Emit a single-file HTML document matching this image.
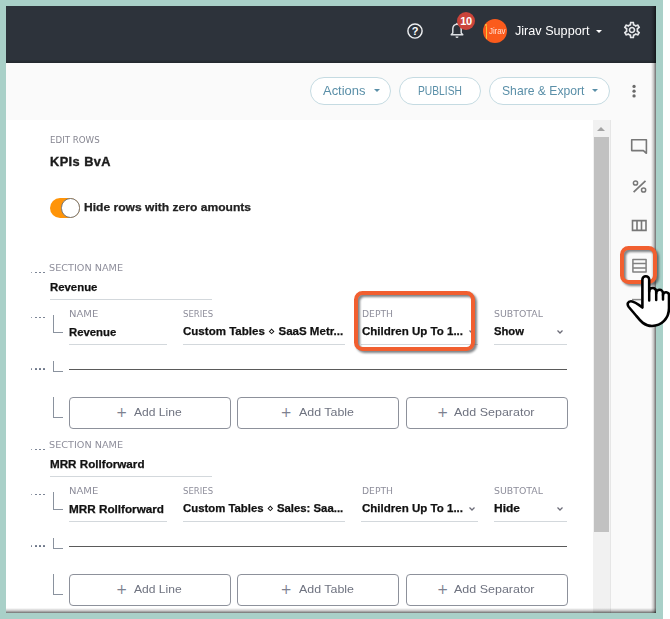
<!DOCTYPE html>
<html lang="en">
<head>
<meta charset="utf-8">
<title>Edit Rows - KPIs BvA</title>
<style>
html,body{margin:0;padding:0;}
body{width:670px;height:619px;background:#fff;position:relative;overflow:hidden;font-family:"Liberation Sans","DejaVu Sans",sans-serif;}
.frame{position:absolute;left:0;top:0;width:663px;height:619px;background:#a9d0c8;}
.app{position:absolute;left:6px;top:6px;width:650.3px;height:606.5px;background:#fafafa;overflow:hidden;}
.app *{box-sizing:border-box;}
.abs{position:absolute;white-space:nowrap;}
.hdr{position:absolute;left:0;top:0;width:651px;height:56.5px;background:linear-gradient(to bottom,#2d333b 0,#2d333b 53.5px,#23282e 56.5px);}
.panel{position:absolute;left:0;top:113.5px;width:587px;height:500px;background:#fff;}
.sbar{position:absolute;left:587px;top:113.5px;width:18px;height:500px;background:#f1f1f1;border-right:1px solid #e6e6e6;}
.thumb{position:absolute;left:588px;top:131px;width:15px;height:394.5px;background:#c1c1c1;}
.pill{position:absolute;top:70.8px;height:28.7px;border:1px solid #c5dbe2;border-radius:14.5px;background:#fff;}
.ul{position:absolute;height:1px;background:#d3d8dc;}
.dots{position:absolute;width:15px;height:2px;}
.dots i{position:absolute;top:0;width:1.5px;height:1.5px;background:#626c80;border-radius:.4px;}
.brk{position:absolute;border-left:1px solid #8a929e;border-bottom:1px solid #8a929e;width:10px;}
.btn{position:absolute;height:32px;width:162px;border:1px solid #8d919b;border-radius:4px;background:#fff;}
.sep{position:absolute;height:1px;background:#5a5a5a;}
.hl{position:absolute;box-sizing:border-box;border:4.3px solid #f15f30;border-radius:8.5px;filter:drop-shadow(2.2px 2.4px 1.3px rgba(40,45,50,.6));}
.b{-webkit-text-stroke:.25px currentColor;}
.djr{font-family:"DejaVu Sans",sans-serif;}
.t{position:absolute;white-space:nowrap;transform-origin:0 50%;display:block;}
.tog{position:absolute;left:43.7px;top:192.2px;width:30.7px;height:19.7px;border-radius:10px;background:#ff9408;}
.knob{position:absolute;right:0;top:0;width:19.7px;height:19.7px;border-radius:10px;background:#fff;border:1px solid #777;}
</style>
</head>
<body>
<div class="frame"></div>
<div class="app">
  <!-- top dark header -->
  <div class="hdr">
    <!-- help icon -->
    <svg class="abs" style="left:400px;top:16px" width="18" height="18" viewBox="0 0 18 18"><circle cx="9" cy="9" r="7.1" fill="none" stroke="#eceef0" stroke-width="1.45"/><text x="9" y="13" text-anchor="middle" font-family="Liberation Sans, sans-serif" font-size="11" font-weight="bold" fill="#fff">?</text></svg>
    <!-- bell -->
    <svg class="abs" style="left:442.8px;top:15.8px" width="16" height="18" viewBox="0 0 16 18"><path d="M8 2.2c-2.6 0-4.2 2-4.2 4.6v4.2l-1.6 1.7h11.6l-1.6-1.7V6.800c0-2.600-1.600-4.600-4.200-4.600z" fill="none" stroke="#dfe2e5" stroke-width="1.45" stroke-linejoin="round"/><path d="M6.500 14.500a1.500 1.500 0 0 0 3 0z" fill="#dfe2e5"/><rect x="7.200" y="0.800" width="1.600" height="2" rx=".8" fill="#dfe2e5"/></svg>
    <div class="abs" style="left:451px;top:5.500px;width:18px;height:18px;border-radius:9px;background:#cb443b;color:#fff;font-size:11px;font-weight:bold;line-height:18px;text-align:center;letter-spacing:-.3px">10</div>
    <!-- avatar -->
    <div class="abs" style="left:477px;top:13px;width:24px;height:24px;border-radius:12px;background:#fb5b1c;color:#ffdccf;font-size:9.5px;line-height:24px;letter-spacing:-.1px"><span style="position:absolute;left:2.8px;top:6.6px;width:1.2px;height:13px;background:#f9c33a;border-radius:1px"></span><span style="position:absolute;left:2.300px;top:5px;width:2.2px;height:2.2px;background:#f9c33a;border-radius:2px"></span><span style="position:absolute;left:5.8px;top:0;transform:scaleX(.84);transform-origin:0 50%">Jirav</span></div>
    <div class="abs" style="left:590px;top:24px;width:0;height:0;border-left:3.500px solid transparent;border-right:3.500px solid transparent;border-top:3.500px solid #fff"></div>
    <!-- gear -->
    <svg class="abs" style="left:616.4px;top:14px" width="20" height="20" viewBox="0 0 24 24"><path fill="#e6e8ea" d="M19.430 12.980c.040-.320.070-.640.070-.980s-.030-.660-.070-.980l2.110-1.650c.190-.150.240-.420.120-.640l-2-3.460c-.090-.160-.260-.250-.440-.250-.060 0-.120.010-.170.030l-2.490 1c-.520-.400-1.080-.730-1.690-.980l-.380-2.650C14.460 2.180 14.250 2 14 2h-4c-.250 0-.460.180-.490.420l-.380 2.650c-.610.250-1.170.590-1.690.980l-2.490-1c-.060-.020-.120-.030-.180-.030-.170 0-.340.090-.430.250l-2 3.460c-.130.220-.070.490.120.640l2.110 1.650c-.040.320-.070.650-.070.980s.030.660.070.980l-2.110 1.650c-.190.150-.240.420-.120.640l2 3.460c.090.160.260.250.440.250.060 0 .120-.10.170-.030l2.490-1c.520.400 1.080.730 1.690.980l.380 2.650c.030.240.240.420.490.420h4c.250 0 .460-.180.490-.420l.380-2.650c.610-.250 1.170-.590 1.690-.980l2.490 1c.060.020.120.030.180.030.170 0 .340-.090.430-.250l2-3.460c.120-.220.070-.490-.120-.640l-2.110-1.650zm-1.980-1.710c.040.310.050.520.050.730 0 .210-.020.430-.050.730l-.140 1.130.890.700 1.080.840-.700 1.210-1.270-.510-1.040-.420-.900.680c-.430.320-.840.560-1.250.730l-1.060.430-.160 1.130-.200 1.350h-1.400l-.190-1.350-.160-1.130-1.060-.430c-.430-.180-.830-.410-1.230-.710l-.910-.700-1.060.430-1.270.510-.700-1.210 1.080-.840.890-.700-.140-1.130c-.030-.310-.050-.540-.050-.740s.020-.430.050-.730l.140-1.130-.890-.700-1.080-.840.700-1.210 1.270.510 1.040.420.900-.680c.430-.320.840-.560 1.250-.730l1.060-.430.160-1.130.200-1.350h1.390l.190 1.350.160 1.130 1.060.430c.430.180.830.410 1.230.710l.910.700 1.060-.430 1.270-.510.700 1.210-1.070.850-.890.700.140 1.130zM12 8c-2.210 0-4 1.790-4 4s1.790 4 4 4 4-1.790 4-4-1.790-4-4-4zm0 6c-1.100 0-2-.900-2-2s.900-2 2-2 2 .900 2 2-.900 2-2 2z"/></svg>
  </div>
  <span class="t" id="t_user" style="left:509.20px;top:15.60px;font-size:13px;line-height:18px;color:#fff;transform:scaleX(0.9714);">Jirav Support</span>
  <div class="pill" style="left:303.5px;width:81.1px"></div>
  <span class="t" id="p_act" style="left:317.40px;top:76.10px;font-size:13px;line-height:18px;color:#5a8fa8;transform:scaleX(0.9967);">Actions</span>
  <div class="abs" style="left:367.6px;top:82.7px;width:0;height:0;border-left:3.2px solid transparent;border-right:3.2px solid transparent;border-top:3.2px solid #5a8fa8"></div>
  <div class="pill" style="left:392.6px;width:82px"></div>
  <span class="t" id="p_pub" style="left:411.90px;top:76.80px;font-size:12px;line-height:16px;color:#5a8fa8;transform:scaleX(0.8548);">PUBLISH</span>
  <div class="pill" style="left:483px;width:120.8px"></div>
  <span class="t" id="p_shr" style="left:496.30px;top:76.10px;font-size:13px;line-height:18px;color:#5a8fa8;transform:scaleX(0.9358);">Share &amp; Export</span>
  <div class="abs" style="left:586.3px;top:82.7px;width:0;height:0;border-left:3.2px solid transparent;border-right:3.2px solid transparent;border-top:3.2px solid #5a8fa8"></div>
  <svg class="abs" style="left:620px;top:74px" width="16" height="24" viewBox="626 80 16 24"><circle cx="634.05" cy="86.4" r="1.65" fill="#6a6a6a"/><circle cx="634.05" cy="91.15" r="1.65" fill="#6a6a6a"/><circle cx="634.05" cy="95.9" r="1.65" fill="#6a6a6a"/></svg>
  <div class="panel"></div><div class="sbar"></div><div class="thumb"></div>
  <div class="abs" style="left:591.2px;top:120.7px;width:0;height:0;border-left:4px solid transparent;border-right:4px solid transparent;border-bottom:4px solid #a3a3a3"></div>
  <span class="t djr" id="h_edit" style="left:44.10px;top:127.00px;font-size:9.5px;line-height:13px;color:#868691;transform:scaleX(0.9127);">EDIT ROWS</span>
  <span class="t b" id="h_title" style="left:44.10px;top:147.50px;font-size:12px;line-height:16px;color:#1c1c1c;font-weight:bold;transform:scaleX(1.0661);letter-spacing:.4px;-webkit-text-stroke:.35px #1c1c1c;">KPIs BvA</span>
  <div class="tog"><div class="knob"></div></div>
  <span class="t b" id="h_hide" style="left:78.40px;top:192.80px;font-size:11.4px;line-height:16px;color:#222;font-weight:bold;transform:scaleX(1.0597);">Hide rows with zero amounts</span>
  <div class="dots" style="left:24.55px;top:265.65px"><i style="left:0px"></i><i style="left:4.8px"></i><i style="left:8.6px"></i><i style="left:12.5px"></i></div>
    <span class="t djr" id="s1_l0" style="left:43.40px;top:254.60px;font-size:9.5px;line-height:13px;color:#8e8e9b;transform:scaleX(1.0181);">SECTION NAME</span>
    <span class="t b" id="s1_v0" style="left:44.00px;top:272.50px;font-size:11.5px;line-height:16px;color:#111;font-weight:bold;transform:scaleX(0.9888);">Revenue</span>
    <div class="ul" style="left:44px;top:293px;width:161.5px"></div>
    <div class="dots" style="left:24.55px;top:310.75px"><i style="left:0px"></i><i style="left:4.8px"></i><i style="left:8.6px"></i><i style="left:12.5px"></i></div>
    <div class="brk" style="left:47px;top:309px;height:18px;width:10px"></div>
    <span class="t djr" id="s1_l1" style="left:63.20px;top:300.70px;font-size:9.5px;line-height:13px;color:#8e8e9b;transform:scaleX(1.0535);">NAME</span>
    <span class="t b" id="s1_v1" style="left:63.20px;top:317.50px;font-size:11.5px;line-height:16px;color:#111;font-weight:bold;transform:scaleX(0.9846);">Revenue</span>
    <div class="ul" style="left:63px;top:338px;width:98px"></div>
    <span class="t djr" id="s1_l2" style="left:176.80px;top:300.70px;font-size:9.5px;line-height:13px;color:#8e8e9b;transform:scaleX(0.8993);">SERIES</span>
    <span class="t b" id="s1_v2" style="left:176.80px;top:316.60px;font-size:11.5px;line-height:16px;color:#111;font-weight:bold;transform:scaleX(1.0028);">Custom Tables <span style="font-weight:normal;-webkit-text-stroke:0">&#8900;</span> SaaS Metr...</span>
    <div class="ul" style="left:177px;top:338px;width:162px"></div>
    <span class="t djr" id="s1_l3" style="left:355.60px;top:300.70px;font-size:9.5px;line-height:13px;color:#8e8e9b;transform:scaleX(0.9688);">DEPTH</span>
    <span class="t b" id="s1_v3" style="left:355.60px;top:316.60px;font-size:11.5px;line-height:16px;color:#111;font-weight:bold;transform:scaleX(1.0026);">Children Up To 1...</span>
    <svg class="abs" style="left:461.8px;top:322.7px" width="8" height="6" viewBox="0 0 8 6"><path d="M1.5 1.5 L4 4 L6.5 1.5" fill="none" stroke="#6c6c78" stroke-width="1.25"/></svg>
    <div class="ul" style="left:355px;top:338px;width:117px"></div>
    <span class="t djr" id="s1_l4" style="left:487.60px;top:300.70px;font-size:9.5px;line-height:13px;color:#8e8e9b;transform:scaleX(0.9871);">SUBTOTAL</span>
    <span class="t b" id="s1_v4" style="left:487.70px;top:316.60px;font-size:11.5px;line-height:16px;color:#111;font-weight:bold;transform:scaleX(0.9781);">Show</span>
    <svg class="abs" style="left:550.3px;top:322.7px" width="8" height="6" viewBox="0 0 8 6"><path d="M1.5 1.5 L4 4 L6.5 1.5" fill="none" stroke="#6c6c78" stroke-width="1.25"/></svg>
    <div class="ul" style="left:488px;top:338px;width:73px"></div>
    <div class="dots" style="left:24.55px;top:362.25px"><i style="left:0px"></i><i style="left:4.8px"></i><i style="left:8.6px"></i><i style="left:12.5px"></i></div>
    <div class="brk" style="left:47px;top:354.5px;height:11.5px;width:10px"></div>
    <div class="sep" style="left:63px;top:363px;width:498px"></div>
    <div class="brk" style="left:47px;top:391px;height:21px;width:10px"></div>
    <div class="btn" style="left:63px;top:391px"></div>
    <span class="t djr" id="s1_p0" style="left:110.00px;top:396.50px;font-size:13.5px;line-height:18px;color:#7d8190;">+</span>
    <span class="t" id="s1_b0" style="left:127.90px;top:397.90px;font-size:11.3px;line-height:16px;color:#6f7380;transform:scaleX(1.0693);">Add Line</span>
    <div class="btn" style="left:231px;top:391px"></div>
    <span class="t djr" id="s1_p1" style="left:274.60px;top:396.50px;font-size:13.5px;line-height:18px;color:#7d8190;">+</span>
    <span class="t" id="s1_b1" style="left:292.60px;top:397.90px;font-size:11.3px;line-height:16px;color:#6f7380;transform:scaleX(1.0990);">Add Table</span>
    <div class="btn" style="left:399.5px;top:391px"></div>
    <span class="t djr" id="s1_p2" style="left:430.90px;top:396.50px;font-size:13.5px;line-height:18px;color:#7d8190;">+</span>
    <span class="t" id="s1_b2" style="left:447.60px;top:397.90px;font-size:11.3px;line-height:16px;color:#6f7380;transform:scaleX(1.1049);">Add Separator</span>
  <div class="dots" style="left:24.55px;top:442.65px"><i style="left:0px"></i><i style="left:4.8px"></i><i style="left:8.6px"></i><i style="left:12.5px"></i></div>
    <span class="t djr" id="s2_l0" style="left:43.40px;top:431.60px;font-size:9.5px;line-height:13px;color:#8e8e9b;transform:scaleX(1.0181);">SECTION NAME</span>
    <span class="t b" id="s2_v0" style="left:44.00px;top:449.50px;font-size:11.5px;line-height:16px;color:#111;font-weight:bold;transform:scaleX(1.0131);">MRR Rollforward</span>
    <div class="ul" style="left:44px;top:470px;width:161.5px"></div>
    <div class="dots" style="left:24.55px;top:487.75px"><i style="left:0px"></i><i style="left:4.8px"></i><i style="left:8.6px"></i><i style="left:12.5px"></i></div>
    <div class="brk" style="left:47px;top:486px;height:18px;width:10px"></div>
    <span class="t djr" id="s2_l1" style="left:63.20px;top:477.70px;font-size:9.5px;line-height:13px;color:#8e8e9b;transform:scaleX(1.0535);">NAME</span>
    <span class="t b" id="s2_v1" style="left:63.20px;top:494.50px;font-size:11.5px;line-height:16px;color:#111;font-weight:bold;transform:scaleX(1.0184);">MRR Rollforward</span>
    <div class="ul" style="left:63px;top:515px;width:98px"></div>
    <span class="t djr" id="s2_l2" style="left:176.80px;top:477.70px;font-size:9.5px;line-height:13px;color:#8e8e9b;transform:scaleX(0.8993);">SERIES</span>
    <span class="t b" id="s2_v2" style="left:176.80px;top:493.60px;font-size:11.5px;line-height:16px;color:#111;font-weight:bold;transform:scaleX(0.9870);">Custom Tables <span style="font-weight:normal;-webkit-text-stroke:0">&#8900;</span> Sales: Saa...</span>
    <div class="ul" style="left:177px;top:515px;width:162px"></div>
    <span class="t djr" id="s2_l3" style="left:355.60px;top:477.70px;font-size:9.5px;line-height:13px;color:#8e8e9b;transform:scaleX(0.9688);">DEPTH</span>
    <span class="t b" id="s2_v3" style="left:355.60px;top:493.60px;font-size:11.5px;line-height:16px;color:#111;font-weight:bold;transform:scaleX(1.0026);">Children Up To 1...</span>
    <svg class="abs" style="left:461.8px;top:499.7px" width="8" height="6" viewBox="0 0 8 6"><path d="M1.5 1.5 L4 4 L6.5 1.5" fill="none" stroke="#6c6c78" stroke-width="1.25"/></svg>
    <div class="ul" style="left:355px;top:515px;width:117px"></div>
    <span class="t djr" id="s2_l4" style="left:487.60px;top:477.70px;font-size:9.5px;line-height:13px;color:#8e8e9b;transform:scaleX(0.9871);">SUBTOTAL</span>
    <span class="t b" id="s2_v4" style="left:487.70px;top:493.60px;font-size:11.5px;line-height:16px;color:#111;font-weight:bold;transform:scaleX(1.0433);">Hide</span>
    <svg class="abs" style="left:550.3px;top:499.7px" width="8" height="6" viewBox="0 0 8 6"><path d="M1.5 1.5 L4 4 L6.5 1.5" fill="none" stroke="#6c6c78" stroke-width="1.25"/></svg>
    <div class="ul" style="left:488px;top:515px;width:73px"></div>
    <div class="dots" style="left:24.55px;top:539.25px"><i style="left:0px"></i><i style="left:4.8px"></i><i style="left:8.6px"></i><i style="left:12.5px"></i></div>
    <div class="brk" style="left:47px;top:531.5px;height:11.5px;width:10px"></div>
    <div class="sep" style="left:63px;top:540px;width:498px"></div>
    <div class="brk" style="left:47px;top:568px;height:21px;width:10px"></div>
    <div class="btn" style="left:63px;top:568px"></div>
    <span class="t djr" id="s2_p0" style="left:110.00px;top:573.50px;font-size:13.5px;line-height:18px;color:#7d8190;">+</span>
    <span class="t" id="s2_b0" style="left:127.90px;top:574.90px;font-size:11.3px;line-height:16px;color:#6f7380;transform:scaleX(1.0693);">Add Line</span>
    <div class="btn" style="left:231px;top:568px"></div>
    <span class="t djr" id="s2_p1" style="left:274.60px;top:573.50px;font-size:13.5px;line-height:18px;color:#7d8190;">+</span>
    <span class="t" id="s2_b1" style="left:292.60px;top:574.90px;font-size:11.3px;line-height:16px;color:#6f7380;transform:scaleX(1.0990);">Add Table</span>
    <div class="btn" style="left:399.5px;top:568px"></div>
    <span class="t djr" id="s2_p2" style="left:430.90px;top:573.50px;font-size:13.5px;line-height:18px;color:#7d8190;">+</span>
    <span class="t" id="s2_b2" style="left:447.60px;top:574.90px;font-size:11.3px;line-height:16px;color:#6f7380;transform:scaleX(1.1049);">Add Separator</span>
  <!-- right sidebar icons -->
  <svg class="abs" style="left:624px;top:132px" width="20" height="18" viewBox="0 0 20 18"><path d="M1.700 1.700H16.400V15.300L13.400 12.600H1.700Z" fill="none" stroke="#777" stroke-width="1.600" stroke-linejoin="round"/></svg>
  <svg class="abs" style="left:625px;top:173px" width="18" height="16" viewBox="0 0 18 16"><path d="M14.500 1.800L2.600 13.200" stroke="#777" stroke-width="1.700" fill="none"/><circle cx="4.500" cy="4" r="2.100" fill="none" stroke="#777" stroke-width="1.500"/><circle cx="12.600" cy="11" r="2.100" fill="none" stroke="#777" stroke-width="1.500"/></svg>
  <svg class="abs" style="left:625px;top:213px" width="18" height="14" viewBox="0 0 18 14"><path d="M1.500 1.600H15V11.400H1.500ZM6 1.600V11.400M10.500 1.600V11.400" fill="none" stroke="#777" stroke-width="1.600"/></svg>
  <svg class="abs" style="left:625px;top:252px" width="18" height="16" viewBox="0 0 18 16"><path d="M1.900 1.500H15.100V14H1.900ZM1.900 5.500H15.100M1.900 10.100H15.100" fill="none" stroke="#808080" stroke-width="1.500" stroke-linejoin="round"/></svg>
  <!-- inner edge shadow of the screenshot -->
  <div class="abs" style="right:0;top:0;width:5px;height:607px;background:linear-gradient(to right,rgba(0,0,0,0),rgba(0,0,0,.2) 50%,rgba(0,0,0,.56))"></div>
  <div class="abs" style="left:0;bottom:0;width:651px;height:5px;background:linear-gradient(to bottom,rgba(0,0,0,0),rgba(0,0,0,.2) 50%,rgba(0,0,0,.56))"></div>
</div>
<!-- annotation highlights -->
<div class="hl" style="left:354px;top:290.800px;width:120.800px;height:60.600px"></div>
<div class="hl" style="left:620px;top:246.400px;width:37.200px;height:37.900px"></div>
<!-- hand cursor -->
<svg class="abs" style="left:620px;top:270px" width="50" height="60" viewBox="620 270 50 60">
  <path d="M632 299.600H641" stroke="#8a8a8a" stroke-width="1.500" fill="none"/>
  <path d="M642.400 307.500L642.400 279.600A3.400 3.400 0 0 1 649.200 279.600L649.200 291.500A3.500 3.500 0 0 1 656.200 291.500L656.200 293.200A3.400 3.400 0 0 1 663 293.200L663 295A3 3 0 0 1 669 295.400L669 308C669 318.500 661.500 326 652 326C644 326 640 320.500 636 315.500L628.800 307C626.600 304.200 628 301.200 631 301.200C634 301.200 638 304 642.400 307.500Z" fill="#fff" stroke="#000" stroke-width="2.600" stroke-linejoin="round"/>
  <path d="M649.200 291.500V300.500M656.200 293.200V300M663 295V299.500" fill="none" stroke="#000" stroke-width="2.500" stroke-linecap="round"/>
</svg>
</body>
</html>
